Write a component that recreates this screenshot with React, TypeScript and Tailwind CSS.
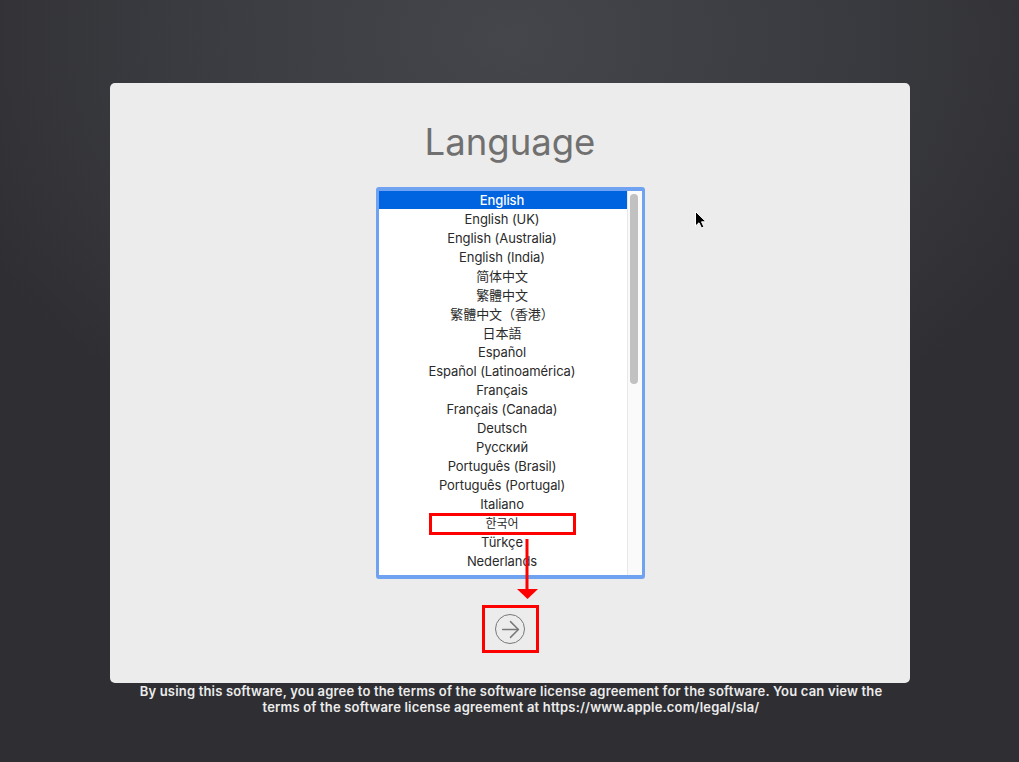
import { ArrowRight } from 'lucide-react';

const LANGUAGES = [
  'English',
  'English (UK)',
  'English (Australia)',
  'English (India)',
  '简体中文',
  '繁體中文',
  '繁體中文（香港）',
  '日本語',
  'Español',
  'Español (Latinoamérica)',
  'Français',
  'Français (Canada)',
  'Deutsch',
  'Русский',
  'Português (Brasil)',
  'Português (Portugal)',
  'Italiano',
  '한국어',
  'Türkçe',
  'Nederlands',
];

function rowClass(lang: string, i: number) {
  if (i === 0) return 'mb-px h-[18px] bg-[#0064e1] pr-[2px] text-center text-[13px] leading-[18px] font-medium tracking-[-0.06px] text-white';
  if (lang === '한국어') return 'h-[19px] pr-[2px] text-center text-[12px] leading-[19px] text-[#2a2a2a]';
  return 'h-[19px] pr-[2px] text-center text-[13px] leading-[19px] tracking-[-0.08px] text-[#2a2a2a]';
}

export default function App() {
  return (
    <div className="relative flex h-[762px] w-full flex-col overflow-hidden bg-[radial-gradient(ellipse_600px_450px_at_50%_5%,#45464b_0%,#3a3b40_55%,#2f2f33_100%)] pt-[83px] font-['Inter','Noto_Sans_CJK_SC',sans-serif]">
      {/* Installer panel */}
      <div className="ml-[110px] flex h-[600px] w-[800px] flex-col items-center rounded-[5px] bg-[#ececec]">
        <h1 className="mt-[34px] text-[36.500px] leading-[50px] font-normal text-[#707070]">Language</h1>

        {/* Language list */}
        <div className="mt-[20px] ml-[1px] flex h-[392px] w-[269px] overflow-hidden rounded-[3px] border-x-[3px] border-y-[4px] border-[#6fa3f2] bg-white">
          <div className="flex-1 overflow-hidden">
            {LANGUAGES.map((lang, i) => (
              <div key={lang} className={rowClass(lang, i)}>
                {lang}
              </div>
            ))}
          </div>
          <div className="w-[15px] border-l border-[#e8e8e8] bg-[#fafafa] pt-[3px] pl-[2px]">
            <div className="h-[190px] w-[8px] rounded-full bg-[#c1c1c1]" />
          </div>
        </div>

        {/* Continue button */}
        <button className="mt-[35px] flex h-[30px] w-[30px] items-center justify-center rounded-full border-[1.5px] border-[#787878] text-[#787878]">
          <ArrowRight size={27} strokeWidth={1.3} />
        </button>
      </div>

      <p className="ml-[126px] w-[770px] text-center text-[13px] leading-[16px] font-semibold tracking-[0.18px] text-[#ececec]">
        By using this software, you agree to the terms of the software license agreement for the software. You can view the terms of the software license agreement at https://www.apple.com/legal/sla/
      </p>

      {/* Red annotations */}
      <div className="absolute top-[513px] left-[429px] h-[22px] w-[147px] border-[3px] border-[#ff0000]" />
      <div className="absolute top-[605px] left-[482px] h-[48px] w-[57px] border-[3px] border-[#ff0000]" />
      <svg className="absolute top-[538px] left-[515px]" width="24" height="62" viewBox="0 0 24 62">
        <path d="M12 1V52" stroke="#ff0000" strokeWidth="3" />
        <path d="M2 51H23L12.500 61Z" fill="#ff0000" />
      </svg>

      {/* Mouse pointer */}
      <svg className="absolute top-[210px] left-[694px]" width="14" height="20" viewBox="0 0 14 20">
        <path d="M1.500 1.500V16L5 12.800L7.500 18L10 17L7.500 11.800H12Z" fill="#000" stroke="#fff" strokeWidth="1" />
      </svg>
    </div>
  );
}
